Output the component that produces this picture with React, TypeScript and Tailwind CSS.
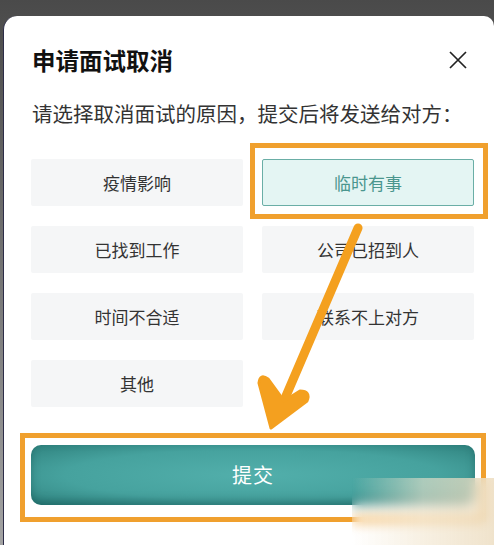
import React, { useState } from "react";

const reasons = [
  "疫情影响",
  "临时有事",
  "已找到工作",
  "公司已招到人",
  "时间不合适",
  "联系不上对方",
  "其他",
];

const font = { fontFamily: '"Noto Sans CJK SC", "Noto Sans", sans-serif' };

const App = () => {
  const [selected, setSelected] = useState(1);

  return (
    <div
      className="relative w-[494px] h-[545px] overflow-hidden bg-gradient-to-b from-[#4a4a4a] to-[#a3a3a3]"
      style={font}
    >
      {/* card */}
      <div className="mt-[16px] ml-[3px] h-[529px] bg-white rounded-tl-[14px] rounded-tr-[10px] border-l-[1.5px] border-[#2d2d48] pl-[27px] pt-[28px]">
        <div className="flex items-center justify-between w-[443px]">
          <h1 className="ml-[1px] text-[23.5px] leading-[32px] font-bold text-[#111]">
            申请面试取消
          </h1>
          <button type="button" className="mr-[7px] w-[18px] h-[18px]">
            <svg viewBox="0 0 18 18" width="18" height="18">
              <path
                d="M1 1L17 17M17 1L1 17"
                stroke="#222"
                strokeWidth="1.7"
                fill="none"
              />
            </svg>
          </button>
        </div>
        <p className="ml-[1px] mt-[22px] text-[20.5px] leading-[30px] text-[#333]">
          请选择取消面试的原因，提交后将发送给对方：
        </p>

        <ul className="mt-[31px] grid grid-cols-2 w-[443px] gap-x-[19px] gap-y-[20px]">
          {reasons.map((text, i) => (
            <li
              key={text}
              onClick={() => setSelected(i)}
              className={
                i === selected
                  ? "h-[47px] flex items-center justify-center text-[17px] rounded-[2px] bg-[#e4f5f3] border border-[#6aaea6] text-[#4a968e]"
                  : "h-[47px] flex items-center justify-center text-[17px] rounded-[2px] bg-[#f5f6f7] text-[#333]"
              }
            >
              {text}
            </li>
          ))}
        </ul>

        <button
          type="button"
          className="mt-[38px] w-[444px] h-[60px] rounded-[10px] bg-[radial-gradient(ellipse_at_center,#52afab_0%,#46a29e_60%,#2f827e_100%)] shadow-[inset_0_-4px_8px_rgba(0,60,60,0.35)] text-white text-[20px] tracking-[1px]"
        >
          提交
        </button>
      </div>

      {/* annotation boxes */}
      <div className="absolute left-[250px] top-[143px] w-[238px] h-[76px] border-[5px] border-[#f0a02e]" />
      <div className="absolute left-[20px] top-[433px] w-[466px] h-[89px] border-[5px] border-[#f0a02e]" />

      {/* annotation arrow */}
      <svg
        className="absolute left-0 top-0"
        width="494"
        height="545"
        viewBox="0 0 494 545"
      >
        <line
          x1="358"
          y1="228"
          x2="286"
          y2="396"
          stroke="#f4a01f"
          strokeWidth="9"
          strokeLinecap="round"
        />
        <path
          d="M271 428 L259 383 Q260 373 268 379 L284 401 L300 391 Q311 391 307 401 Z"
          fill="#f4a01f"
          stroke="#f4a01f"
          strokeWidth="3"
          strokeLinejoin="round"
        />
      </svg>

      {/* blurred watermark */}
      <div className="absolute left-[352px] top-[478px] w-[142px] h-[67px] backdrop-blur-[6px] bg-gradient-to-r from-[#ffffff00] via-[#f2e6cf99] to-[#ecdcbfcc]" />
    </div>
  );
};

export default App;
